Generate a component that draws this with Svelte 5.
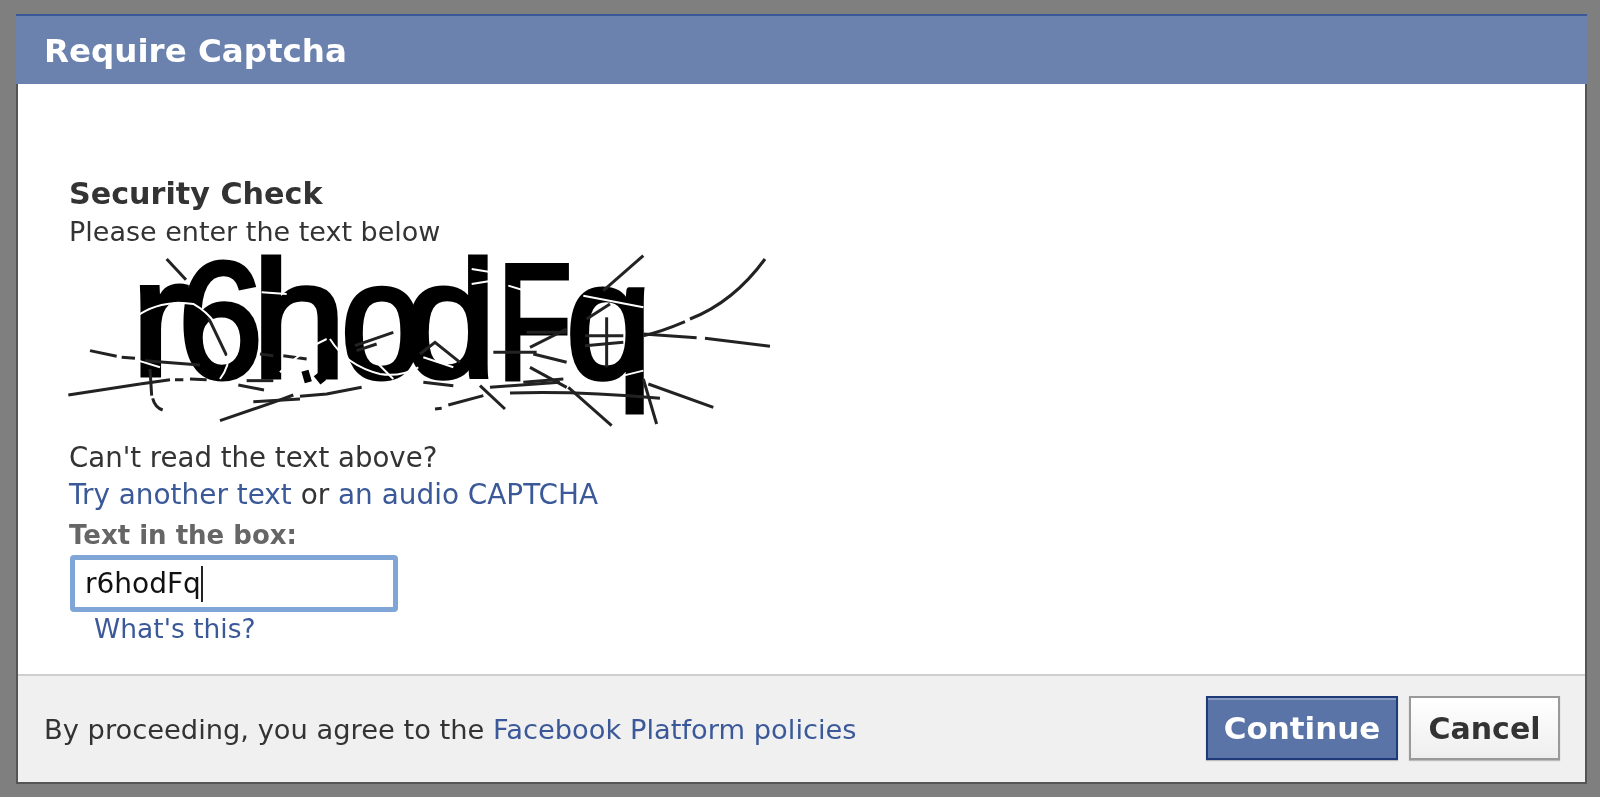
<script>
  // captcha letters: x, baseline, horizontal stretch
  const letters = [
    { c: "r", x: 131, y: 376, sx: 1.05 },
    { c: "6", x: 178, y: 378, sx: 0.92 },
    { c: "h", x: 252, y: 378, sx: 1.02 },
    { c: "o", x: 341, y: 378, sx: 0.88 },
    { c: "d", x: 404, y: 378, sx: 1.0 },
    { c: "F", x: 497, y: 380, sx: 0.74 },
    { c: "q", x: 566, y: 379, sx: 0.93 }
  ];

  // noise, in zoom-crop units (3x), left and right half of the image
  const darkLeft = [
    "M320 60 L378 122",
    "M25 468 L240 435",
    "M240 435 L330 422 M345 422 L370 422 M390 420 L440 422",
    "M90 335 L170 352 M185 355 L225 358 M255 365 L420 378",
    "M270 390 L275 470",
    "M278 478 Q285 505 308 513",
    "M480 545 L640 490 L700 468 M720 472 L800 465 L905 445",
    "M580 488 L720 480",
    "M535 438 L612 453",
    "M445 235 L500 350",
    "M885 320 L1000 280",
    "M890 335 L950 315",
    "M600 345 L640 350 M670 350 L740 360",
    "M560 425 L640 425"
  ];
  const blobLeft = [
    "M735 395 L745 430",
    "M770 405 L790 430"
  ];
  const darkRight = [
    "M580 155 L700 50",
    "M700 290 Q750 280 825 248 M840 240 Q970 190 1065 60",
    "M700 285 L860 296 M885 298 L1080 322",
    "M475 445 L605 560",
    "M300 462 Q500 455 750 478",
    "M715 435 L910 505",
    "M700 420 L740 555",
    "M75 510 L95 508 M115 498 L220 470",
    "M210 440 L285 510",
    "M360 325 L470 270",
    "M360 385 L470 445",
    "M370 345 L470 370",
    "M340 430 L460 420",
    "M240 445 L450 430",
    "M40 430 L130 440",
    "M590 235 L590 385",
    "M525 290 L640 290",
    "M525 320 L640 310",
    "M530 240 L600 195",
    "M250 340 L380 340",
    "M350 280 L470 280",
    "M30 345 L75 310 L150 370"
  ];
  const whiteLeft = [
    "M225 235 Q300 180 400 195 Q480 240 505 340 Q510 380 480 420",
    "M235 365 L300 385",
    "M605 160 L680 165",
    "M660 400 Q730 330 800 300 M810 300 Q860 380 960 405 Q1020 415 1075 385",
    "M940 360 L1000 420"
  ];
  const whiteRight = [
    "M185 90 L245 100",
    "M185 135 L245 125",
    "M295 140 L360 160",
    "M520 170 L700 205",
    "M640 410 L700 395",
    "M40 355 L130 385"
  ];
</script>

<div class="dialog">
  <div class="title">Require Captcha</div>

  <div class="content">
    <h2>Security Check</h2>
    <p>Please enter the text below</p>

    <svg class="captcha" viewBox="66 252 720 180" width="720" height="180" role="img" aria-label="captcha image">
      <g class="letters">
        {#each letters as l}
          <text transform="translate({l.x} {l.y}) scale({l.sx} 1)">{l.c}</text>
        {/each}
      </g>
      <g transform="translate(60 240) scale(0.3333)" class="dark">
        {#each darkLeft as d}<path {d} />{/each}
        {#each blobLeft as d}<path class="blob" {d} />{/each}
      </g>
      <g transform="translate(410 240) scale(0.3333)" class="dark">
        {#each darkRight as d}<path {d} />{/each}
      </g>
      <g transform="translate(60 240) scale(0.3333)" class="light">
        {#each whiteLeft as d}<path {d} />{/each}
      </g>
      <g transform="translate(410 240) scale(0.3333)" class="light">
        {#each whiteRight as d}<path {d} />{/each}
      </g>
    </svg>

    <p class="cant">Can't read the text above?</p>
    <p class="links"><a href="#try">Try another text</a> or <a href="#audio">an audio CAPTCHA</a></p>
    <div class="label">Text in the box:</div>
    <div class="input">r6hodFq<span class="caret"></span></div>
    <a class="whats" href="#whats">What's this?</a>
  </div>

  <div class="footer">
    <span>By proceeding, you agree to the <a href="#policies">Facebook Platform policies</a></span>
    <div class="buttons">
      <button class="primary">Continue</button>
      <button class="cancel">Cancel</button>
    </div>
  </div>
</div>

<style>
  :global(body) {
    background: #7f7f7f;
  }

  .dialog {
    box-sizing: border-box;
    width: 1571px;
    height: 770px;
    margin: 14px 0 0 16px;
    display: flex;
    flex-direction: column;
    background: #fff;
    border: 2px solid #555;
    border-top: none;
    font-family: "DejaVu Sans", sans-serif;
    font-size: 27px;
    color: #333;
    filter: blur(0.4px);
  }

  .title {
    box-sizing: border-box;
    height: 70px;
    margin: 0 -2px;
    padding: 13px 0 0 28px;
    background: #6c82ae;
    border-top: 2px solid #3b5998;
    color: #fff;
    font-size: 32.5px;
    font-weight: bold;
    line-height: 44px;
  }

  .content {
    flex: 1;
    padding: 91px 0 0 51px;
  }

  h2 {
    margin: 0;
    font-size: 30.2px;
    line-height: 38px;
  }

  p {
    margin: 0;
    line-height: 37px;
  }

  a {
    color: #3b5998;
    text-decoration: none;
  }

  .captcha {
    display: block;
    margin: 1px 0 0 -3px;
    filter: blur(0.6px);
  }

  .letters text {
    font-family: "Liberation Sans", sans-serif;
    font-size: 166px;
    fill: #000;
    stroke: #000;
    stroke-width: 5px;
  }

  .dark path {
    fill: none;
    stroke: #222;
    stroke-width: 9px;
  }

  .dark .blob {
    stroke: #000;
    stroke-width: 22px;
  }

  .light path {
    fill: none;
    stroke: #fff;
    stroke-width: 6px;
  }

  .cant {
    margin-top: 8px;
    font-size: 27.6px;
  }

  .links {
    font-size: 27.9px;
  }

  .label {
    margin: 2px 0 0;
    font-size: 26px;
    font-weight: bold;
    color: #666;
    line-height: 40px;
  }

  .input {
    box-sizing: border-box;
    width: 328px;
    height: 57px;
    margin: 0 0 0 1px;
    padding: 0 0 0 10px;
    display: flex;
    align-items: center;
    border: 5px solid #7fa6d6;
    border-radius: 4px;
    font-size: 28px;
    color: #111;
    background: #fff;
  }

  .caret {
    display: inline-block;
    width: 2px;
    height: 36px;
    background: #222;
  }

  .whats {
    display: block;
    margin: 1px 0 0 25px;
    font-size: 26.5px;
  }

  .footer {
    box-sizing: border-box;
    height: 108px;
    padding: 0 25px 0 26px;
    display: flex;
    align-items: center;
    justify-content: space-between;
    background: #f0f0f1;
    border-top: 2px solid #cfcfcf;
    font-size: 27.3px;
  }

  .buttons {
    display: flex;
    gap: 11px;
    margin-bottom: 2px;
  }

  button {
    box-sizing: border-box;
    height: 64px;
    font-family: inherit;
    font-size: 30px;
    font-weight: bold;
    padding: 0;
  }

  .primary {
    width: 192px;
    color: #fff;
    font-size: 31px;
    background: #5b74a8;
    border: 2px solid #1f3a78;
    box-shadow: inset 0 2px 0 #8a9cc2, 0 1px 1px #bbb;
  }

  .cancel {
    width: 151px;
    color: #333;
    background: linear-gradient(#fff, #eee);
    border: 2px solid #999;
    box-shadow: 0 1px 1px #bbb;
  }
</style>
